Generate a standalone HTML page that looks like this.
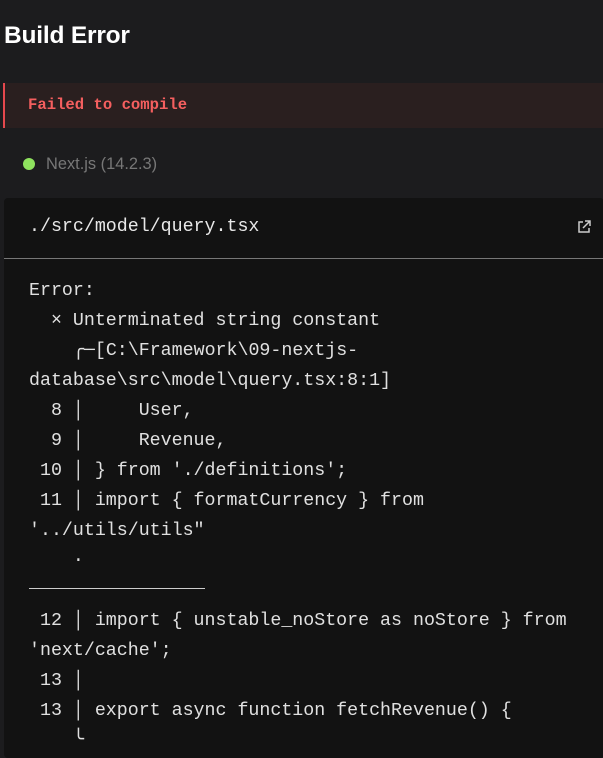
<!DOCTYPE html>
<html><head><meta charset="utf-8"><style>
body{margin:0;background:#1c1c1e;width:603px;height:737px;overflow:hidden;font-family:"Liberation Sans",sans-serif;}
h1{position:absolute;left:4px;top:22px;margin:0;font-size:24.5px;font-weight:bold;color:#fff;letter-spacing:-0.2px}
.fail{position:absolute;left:3px;top:83px;width:600px;height:45px;background:#2a1f1f;border-left:2px solid #e5484d;box-sizing:border-box}
.fail span{position:absolute;left:23px;top:13px;font-family:"Liberation Mono",monospace;font-size:15.6px;font-weight:bold;color:#f55f5f}
.ver{position:absolute;left:23px;top:155px;color:#777;font-size:16.4px}
.ver i{display:inline-block;width:12px;height:12px;border-radius:50%;background:#8ee25e;margin-right:11px;vertical-align:-1px}
.code{position:absolute;left:4px;top:198px;width:600px;height:560px;background:#121212;border-radius:4px}
.file{position:absolute;left:25px;top:19px;font-family:"Liberation Mono",monospace;font-size:18.3px;color:#e8e8e8}
.hr{position:absolute;left:0;top:60px;width:600px;height:1px;background:#777}
pre{position:absolute;left:25px;top:78px;margin:0;font-family:"Liberation Mono",monospace;font-size:18.3px;line-height:30px;color:#e0e0e0}
.ul{position:absolute;left:25px;top:390px;width:176px;height:1px;background:#ccc}
</style></head><body>
<h1>Build Error</h1>
<div class="fail"><span>Failed to compile</span></div>
<div class="ver"><i></i>Next.js (14.2.3)</div>
<div class="code">
<div class="file">./src/model/query.tsx</div>
<svg style="position:absolute;left:572px;top:21px" width="16" height="16" viewBox="0 0 16 16" fill="none" stroke="#ccc" stroke-width="1.5"><path d="M7 3H3v10h10V9M9 2h5v5M14 2L7 9"/></svg>
<div class="hr"></div>
<pre>Error:
  × Unterminated string constant
    ╭─[C:\Framework\09-nextjs-
database\src\model\query.tsx:8:1]
  8 │     User,
  9 │     Revenue,
 10 │ } from './definitions';
 11 │ import { formatCurrency } from
'../utils/utils"
    ·

 12 │ import { unstable_noStore as noStore } from
'next/cache';
 13 │
 13 │ export async function fetchRevenue() {
    ╰</pre>
<div class="ul"></div>
</div>
</body></html>
